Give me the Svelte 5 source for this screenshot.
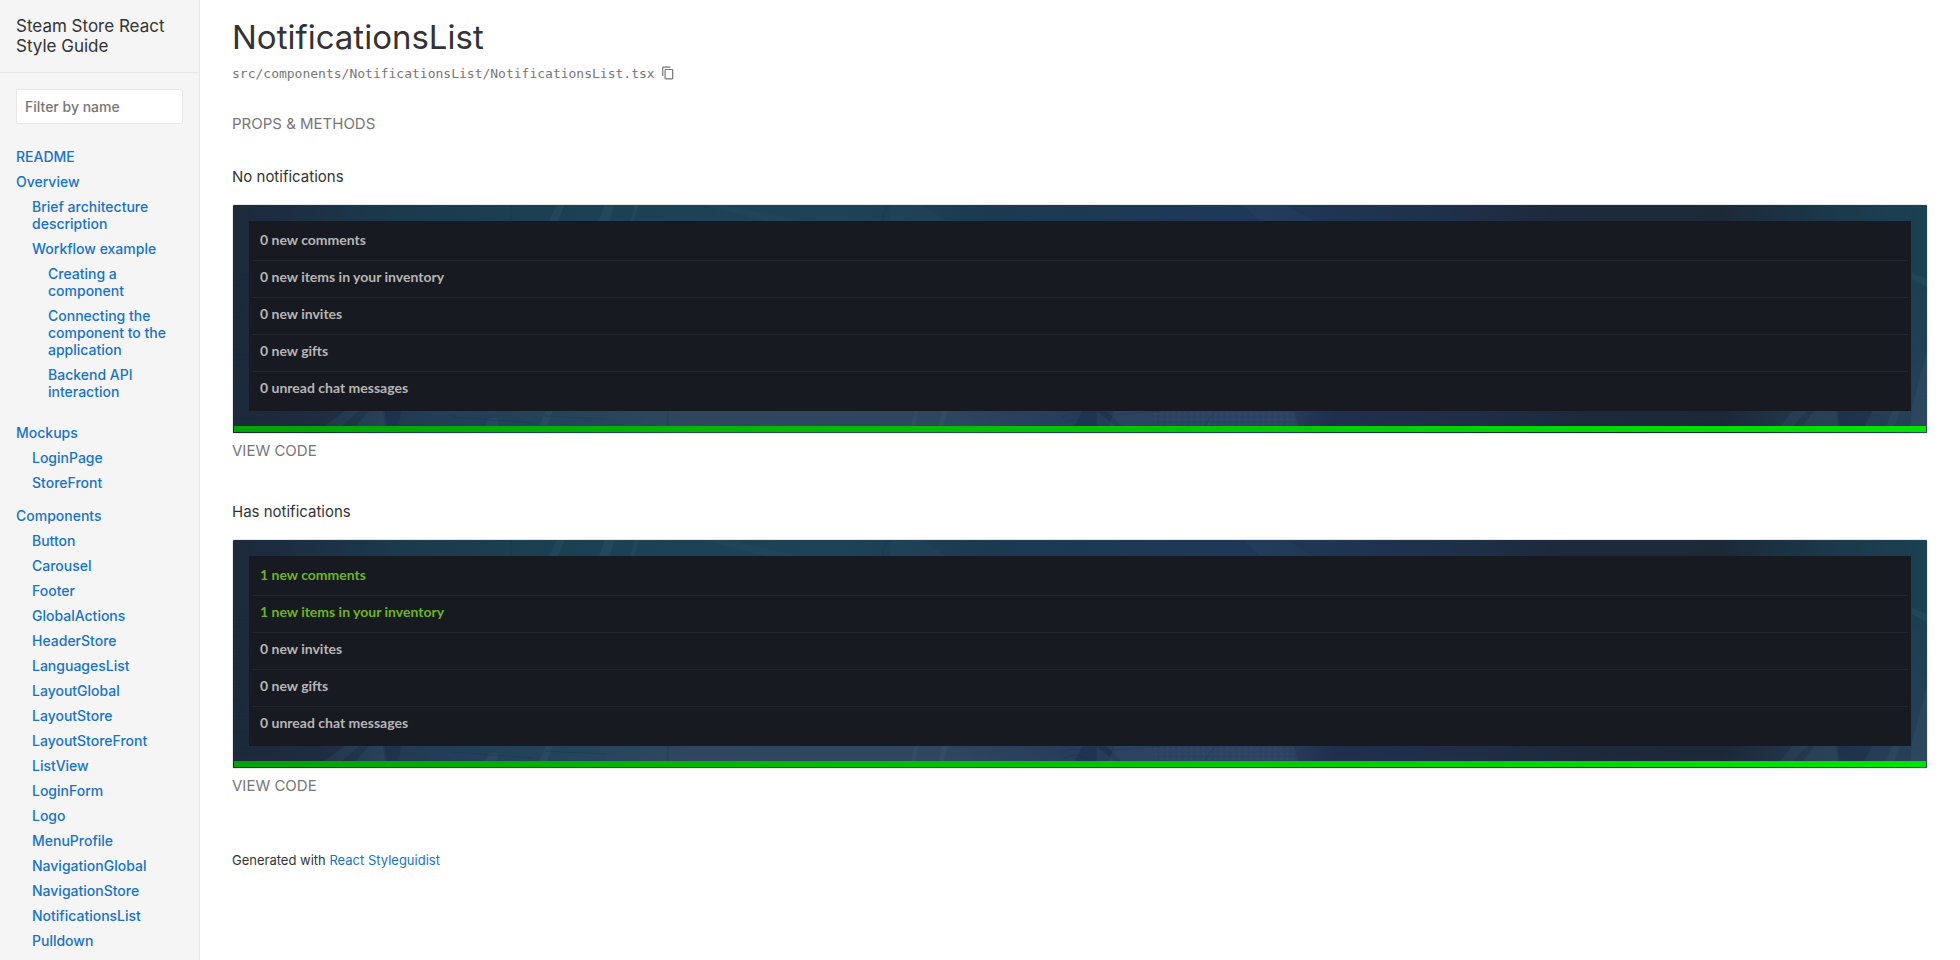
<script>
  const overview = [
    { name: 'Brief architecture description', children: [] },
    {
      name: 'Workflow example',
      children: [
        'Creating a component',
        'Connecting the component to the application',
        'Backend API interaction',
      ],
    },
  ];
  const mockups = ['LoginPage', 'StoreFront'];
  const components = [
    'Button', 'Carousel', 'Footer', 'GlobalActions', 'HeaderStore', 'LanguagesList',
    'LayoutGlobal', 'LayoutStore', 'LayoutStoreFront', 'ListView', 'LoginForm', 'Logo',
    'MenuProfile', 'NavigationGlobal', 'NavigationStore', 'NotificationsList', 'Pulldown',
    'SpecialOffersTab',
  ];
  const examples = [
    { id: 'none', title: 'No notifications', comments: 0, items: 0 },
    { id: 'some', title: 'Has notifications', comments: 1, items: 1 },
  ].map((e) => ({
    id: e.id,
    title: e.title,
    rows: [
      [e.comments, 'new comments'],
      [e.items, 'new items in your inventory'],
      [0, 'new invites'],
      [0, 'new gifts'],
      [0, 'unread chat messages'],
    ],
  }));
</script>

{#snippet artwork(id)}
  <svg class="art" viewBox="0 0 1695 228" preserveAspectRatio="none" aria-hidden="true">
    <defs>
      <linearGradient id="top-{id}">
        <stop offset="0" stop-color="#1c2a3a" />
        <stop offset="0.03" stop-color="#1d2d41" />
        <stop offset="0.1" stop-color="#1b3b4d" />
        <stop offset="0.22" stop-color="#1c4154" />
        <stop offset="0.36" stop-color="#1e4258" />
        <stop offset="0.45" stop-color="#1b3a52" />
        <stop offset="0.6" stop-color="#1f3858" />
        <stop offset="0.71" stop-color="#1e314c" />
        <stop offset="0.78" stop-color="#1e2a3c" />
        <stop offset="0.88" stop-color="#1c2a38" />
        <stop offset="0.95" stop-color="#1b3a4c" />
        <stop offset="1" stop-color="#1b4153" />
      </linearGradient>
      <linearGradient id="low-{id}">
        <stop offset="0" stop-color="#1c2a3b" />
        <stop offset="0.05" stop-color="#1e2c3f" />
        <stop offset="0.09" stop-color="#233a54" />
        <stop offset="0.2" stop-color="#24455b" />
        <stop offset="0.27" stop-color="#30475f" />
        <stop offset="0.42" stop-color="#2f475f" />
        <stop offset="0.5" stop-color="#263c5a" />
        <stop offset="0.62" stop-color="#293e5e" />
        <stop offset="0.65" stop-color="#1f2f4d" />
        <stop offset="0.72" stop-color="#202e48" />
        <stop offset="0.8" stop-color="#1d2a3b" />
        <stop offset="0.88" stop-color="#1c2938" />
        <stop offset="0.93" stop-color="#24384e" />
        <stop offset="1" stop-color="#274159" />
      </linearGradient>
      <linearGradient id="fade-{id}" x1="0" y1="0" x2="0" y2="1">
        <stop offset="0.3" stop-color="#fff" stop-opacity="0" />
        <stop offset="0.95" stop-color="#fff" />
      </linearGradient>
      <mask id="mask-{id}"><rect width="1695" height="228" fill="url(#fade-{id})" /></mask>
      <pattern id="dots-{id}" width="6" height="5" patternUnits="userSpaceOnUse">
        <circle cx="2" cy="2" r="1" fill="#1d3150" fill-opacity="0.3" />
        <circle cx="5" cy="4" r="1" fill="#48607f" fill-opacity="0.2" />
      </pattern>
    </defs>
    <rect width="1695" height="228" fill="url(#top-{id})" />
    <rect width="1695" height="228" fill="url(#low-{id})" mask="url(#mask-{id})" />
    <g fill="#5a87a0" fill-opacity="0.1">
      <path d="M316 16 324 0H332L325 16Z M366 16 372 0H382L377 16Z M398 16 402 0H406L401 16Z" />
      <path d="M90 222 112 206H126L108 222Z M122 222 136 206H150L152 222Z M306 222 313 206H320L314 222Z" />
      <path d="M252 222 256 213H266L264 222Z M678 222 682 206H686L682 222Z M706 222 709 206H715L711 222Z" />
      <path d="M1548 222 1560 206H1575L1560 222Z M1570 222 1582 206H1604L1606 222Z M1654 222 1660 206H1668L1662 222Z" />
      <path d="M1680 68 1695 74V82L1680 74Z M1680 202 1690 165 1695 145V228H1678Z" />
    </g>
    <path d="M470 0H494L566 16H532Z M660 0H690L714 16H656Z M1010 0H1054L1082 16H1028Z" fill="#5a87a0" fill-opacity="0.05" />
    <g fill="#172944" fill-opacity="0.4">
      <path d="M152 206H168L166 222H154Z M874 206 890 222H884L864 206Z M850 206H864V222H842Z" />
      <path d="M1606 206H1640L1632 222H1608Z" />
    </g>
    <path d="M882 206H1062L1066 222H876Z" fill="#405774" fill-opacity="0.25" />
    <path d="M918 206H1062L1066 222H924Z" fill="url(#dots-{id})" />
    <g fill="none" stroke="#15344a" stroke-opacity="0.35">
      <path d="M278 0V16 M650 16Q650 4 658 0 M435 206V222 M880 210 928 206 M972 222Q976 212 984 206 M830 212Q840 206 852 212 M832 218Q842 212 854 218" />
      <path d="M220 212 300 218 M312 211 374 214" />
    </g>
  </svg>
{/snippet}

<div class="page">
  <aside class="sidebar">
    <h1 class="brand">Steam Store React Style Guide</h1>
    <div class="search"><input type="text" placeholder="Filter by name" aria-label="Filter by name" /></div>
    <nav>
      <ul class="tree">
        <li><a href="#readme">README</a></li>
        <li>
          <a href="#overview">Overview</a>
          <ul>
            {#each overview as section}
              <li>
                <a href="#{section.name}">{section.name}</a>
                {#if section.children.length}
                  <ul>
                    {#each section.children as child}
                      <li><a href="#{child}">{child}</a></li>
                    {/each}
                  </ul>
                {/if}
              </li>
            {/each}
          </ul>
        </li>
        {#each [['Mockups', mockups], ['Components', components]] as [heading, names]}
          <li>
            <a href="#{heading}">{heading}</a>
            <ul>
              {#each names as name}
                <li><a href="#{name}">{name}</a></li>
              {/each}
            </ul>
          </li>
        {/each}
      </ul>
    </nav>
  </aside>

  <main>
    <header>
      <h2>NotificationsList</h2>
      <div class="path">
        <span>src/components/NotificationsList/NotificationsList.tsx</span>
        <button class="copy" aria-label="Copy to clipboard">
          <svg viewBox="0 0 24 24" width="14" height="14" aria-hidden="true">
            <path fill="currentColor" d="M16 1H4c-1.100 0-2 .9-2 2v14h2V3h12V1zm3 4H8c-1.100 0-2 .9-2 2v14c0 1.100.9 2 2 2h11c1.100 0 2-.9 2-2V7c0-1.100-.9-2-2-2zm0 16H8V7h11v14z" />
          </svg>
        </button>
      </div>
    </header>
    <button class="toggle props">Props &amp; methods</button>

    {#each examples as example (example.id)}
      <section>
        <h3>{example.title}</h3>
        <div class="preview">
          {@render artwork(example.id)}
          <div class="stage">
            <ul class="notifications">
              {#each example.rows as [count, label]}
                <li><a href="#notifications" class:active={count > 0}>{count} {label}</a></li>
              {/each}
            </ul>
          </div>
          <div class="bar"></div>
        </div>
        <button class="toggle">View code</button>
      </section>
    {/each}

    <footer>Generated with <a href="#styleguidist">React Styleguidist</a></footer>
  </main>
</div>

<style>
  :global(body) {
    margin: 0;
    background: #fff;
  }
  .page {
    display: grid;
    grid-template-columns: 200px minmax(0, 1fr);
    height: 100vh;
    overflow: hidden;
    color: #333;
    font-family: Inter, sans-serif;
  }
  h1, h2, h3, ul {
    margin: 0;
    padding: 0;
    font-weight: 400;
    list-style: none;
  }
  a {
    color: #1673c7;
    text-decoration: none;
  }
  button {
    padding: 0;
    border: 0;
    background: none;
    color: #767676;
    font-family: inherit;
    cursor: pointer;
  }
  .sidebar {
    overflow: hidden;
    border-right: 1px solid #e8e8e8;
    background: #f5f5f5;
  }
  .brand {
    padding: 16px;
    border-bottom: 1px solid #e8e8e8;
    font-size: 17px;
    line-height: 20px;
  }
  .search {
    padding: 16px;
  }
  input {
    box-sizing: border-box;
    display: block;
    width: 100%;
    height: 35px;
    padding: 8px;
    border: 1px solid #e8e8e8;
    border-radius: 2px;
    background: #fff;
    color: #333;
    font-family: inherit;
    font-size: 14px;
    font-weight: 500;
  }
  input::placeholder {
    color: #767676;
    opacity: 1;
  }
  .tree {
    padding: 8px 16px;
    font-size: 14px;
    font-weight: 500;
    line-height: 17px;
  }
  .tree a {
    display: block;
    margin-bottom: 8px;
  }
  .tree ul {
    padding-left: 16px;
    font-weight: 500;
  }
  .tree > li > ul,
  .tree ul ul {
    padding-bottom: 8px;
  }
  main {
    padding: 16px 32px;
  }
  h2 {
    font-size: 33px;
    line-height: 42px;
  }
  .path {
    display: flex;
    align-items: center;
    gap: 6px;
    height: 30px;
    color: #767676;
    font-family: "DejaVu Sans Mono", monospace;
    font-size: 13px;
  }
  .copy {
    display: flex;
  }
  .toggle {
    display: block;
    font-size: 15px;
    line-height: 20px;
    text-transform: uppercase;
  }
  .props {
    margin: 26px 0 32px;
  }
  section {
    margin-bottom: 40px;
  }
  h3 {
    margin-bottom: 16px;
    font-size: 15px;
    line-height: 22px;
  }
  .preview {
    position: relative;
    margin-bottom: 7px;
    overflow: hidden;
    border: 1px solid #e8e8e8;
    border-radius: 2px;
  }
  .art {
    position: absolute;
    inset: 0;
    width: 100%;
    height: 100%;
  }
  .stage {
    position: relative;
    padding: 16px 16px 15px;
  }
  .notifications {
    padding: 3px;
    background: #171a21;
  }
  .notifications li + li {
    border-top: 1px solid #22262e;
  }
  .notifications a {
    display: block;
    padding: 6px 8px 10px;
    color: #b8b6b4;
    font-family: Lato, sans-serif;
    font-size: 14px;
    font-weight: 700;
    line-height: 20px;
  }
  .notifications a.active {
    color: #6fb420;
  }
  .bar {
    position: relative;
    height: 6px;
    margin: 0 1px 1px;
    background: linear-gradient(90deg, #00a400, #00e400);
  }
  footer {
    padding-top: 14px;
    font-size: 13px;
    line-height: 20px;
  }
</style>
